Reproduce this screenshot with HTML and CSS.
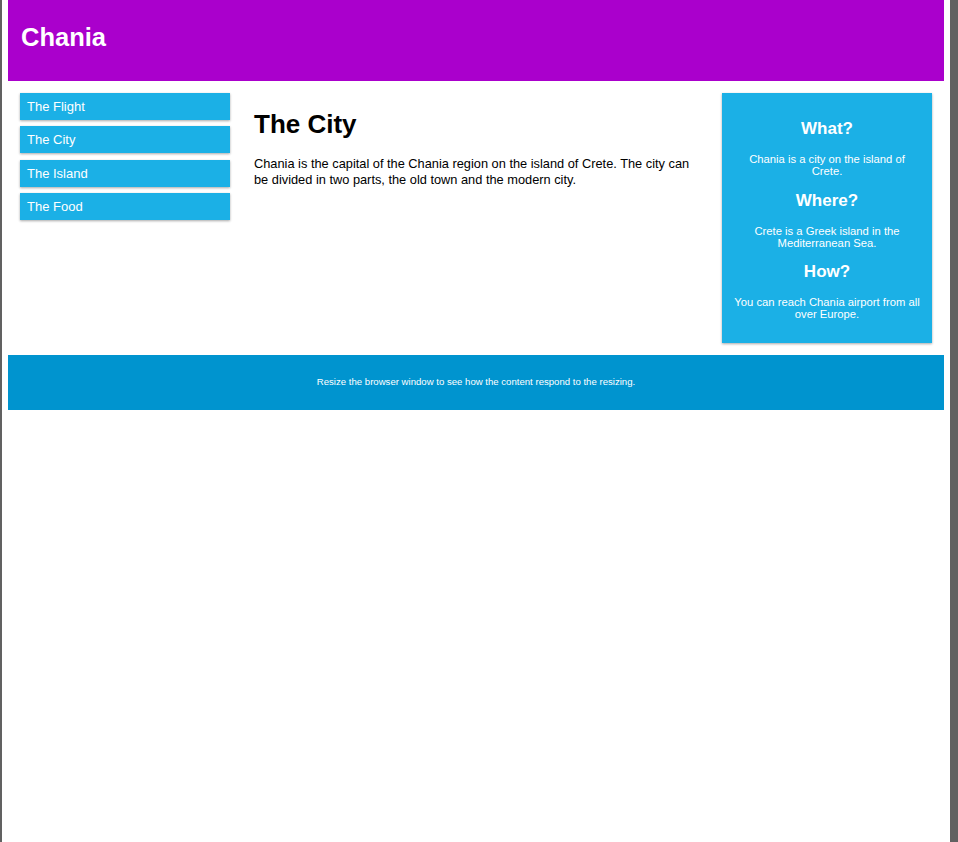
FILE: index.html
```html
<!DOCTYPE html>
<html lang="en">
<head>
<meta charset="utf-8">
<title>Chania</title>
<link rel="stylesheet" href="styles.css">
</head>
<body>
<div class="frame">
  <header class="header">
    <h1 class="title">Chania</h1>
  </header>
  <div class="row">
    <nav class="col menu">
      <ul class="menu-list">
        <li class="menu-item">The Flight</li>
        <li class="menu-item">The City</li>
        <li class="menu-item">The Island</li>
        <li class="menu-item">The Food</li>
      </ul>
    </nav>
    <main class="col main">
      <h1 class="main-title">The City</h1>
      <p class="main-text">Chania is the capital of the Chania region on the island of Crete. The city can be divided in two parts, the old town and the modern city.</p>
    </main>
    <div class="col side">
      <aside class="aside">
        <h2 class="aside-title">What?</h2>
        <p class="aside-text">Chania is a city on the island of Crete.</p>
        <h2 class="aside-title">Where?</h2>
        <p class="aside-text">Crete is a Greek island in the Mediterranean Sea.</p>
        <h2 class="aside-title">How?</h2>
        <p class="aside-text">You can reach Chania airport from all over Europe.</p>
      </aside>
    </div>
  </div>
  <footer class="footer">
    <p class="footer-text">Resize the browser window to see how the content respond to the resizing.</p>
  </footer>
</div>
</body>
</html>
```
FILE: styles.css
```css
* { box-sizing: border-box; }
html, body { margin: 0; padding: 0; background: #ffffff; }
body { font-family: "Liberation Sans", Arial, sans-serif; color: #000; }

.frame {
  min-height: 842px;
  border-left: 2px solid #616161;
  border-right: 8px solid #616161;
  padding: 0 6px;
  background: #ffffff;
}

.header {
  background: #aa00cc;
  color: #ffffff;
  padding: 22px 13px 29px;
}
.title {
  margin: 0;
  font-size: 25.5px;
  line-height: 30px;
  font-weight: bold;
}

.row {
  display: flex;
}
.col { padding: 12px; }
.menu { width: 25%; }
.main { width: 50%; }
.side { width: 25%; }

.menu-list {
  list-style: none;
  margin: 0;
  padding: 0;
}
.menu-item {
  background: #1bb0e6;
  color: #ffffff;
  font-size: 13px;
  line-height: 15px;
  padding: 6px 7px;
  margin-bottom: 6.4px;
  box-shadow: 0 1px 3px rgba(0,0,0,0.12), 0 1px 2px rgba(0,0,0,0.24);
}

.main-title {
  margin: 16px 0 0;
  font-size: 26px;
  line-height: 30px;
  font-weight: bold;
}
.main-text {
  margin: 17px 0 0;
  font-size: 12.8px;
  line-height: 16px;
}

.aside {
  background: #1bb0e6;
  color: #ffffff;
  text-align: center;
  padding: 26px 12px 23px;
  box-shadow: 0 1px 3px rgba(0,0,0,0.12), 0 1px 2px rgba(0,0,0,0.24);
}
.aside-title {
  margin: 0;
  font-size: 17px;
  line-height: 20px;
  font-weight: bold;
}
.aside-text {
  margin: 14px 0 13.5px;
  font-size: 11.25px;
  line-height: 12px;
}
.aside-text:last-child { margin-bottom: 0; }

.footer {
  background: #0094cf;
  color: #ffffff;
  text-align: center;
  padding: 21px 12px 22px;
}
.footer-text {
  margin: 0;
  font-size: 9.6px;
  line-height: 12px;
}
```
